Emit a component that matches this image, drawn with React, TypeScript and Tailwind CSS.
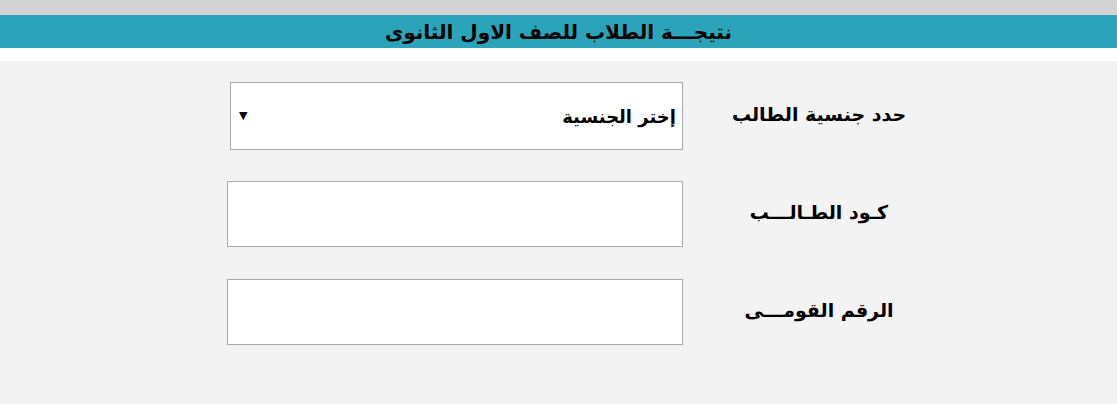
import React, { JSX } from "react";

const arabic = { fontFamily: '"DejaVu Sans", "Liberation Sans", sans-serif' };

function Row({ label, children }: { label: string; children: React.ReactNode }): JSX.Element {
  return (
    <div className="flex items-center">
      {children}
      <div dir="rtl" className="w-[272px] text-center text-[19px] font-bold text-black pb-[4px]">
        {label}
      </div>
    </div>
  );
}

export default function App(): JSX.Element {
  return (
    <div className="min-h-[404px] bg-[#f3f3f3]" style={arabic}>
      <div className="h-[15px] bg-[#d3d3d3]" />
      <div className="h-[33px] bg-[#2ba3b8] flex items-center justify-center">
        <h1 dir="rtl" className="text-[20px] font-bold text-black leading-none">
          نتيجـــة الطلاب للصف الاول الثانوى
        </h1>
      </div>
      <div className="h-[13px] bg-white" />
      <div className="pl-[227px] pt-[21px] flex flex-col">
        <Row label="حدد جنسية الطالب">
          <div
            dir="rtl"
            className="ml-[3px] w-[453px] h-[68px] bg-white border border-[#a9a9a9] flex items-center justify-between pr-[6px] pl-[8px]"
          >
            <span className="text-[18px] font-bold text-black">إختر الجنسية</span>
            <span className="text-[11px] text-black">▼</span>
          </div>
        </Row>
        <div className="mt-[31px]">
          <Row label="كـود الطـالـــب">
            <input
              type="text"
              className="w-[456px] h-[66px] bg-white border border-[#a9a9a9] outline-none"
            />
          </Row>
        </div>
        <div className="mt-[32px]">
          <Row label="الرقم القومـــى">
            <input
              type="text"
              className="w-[456px] h-[66px] bg-white border border-[#a9a9a9] outline-none"
            />
          </Row>
        </div>
      </div>
    </div>
  );
}
